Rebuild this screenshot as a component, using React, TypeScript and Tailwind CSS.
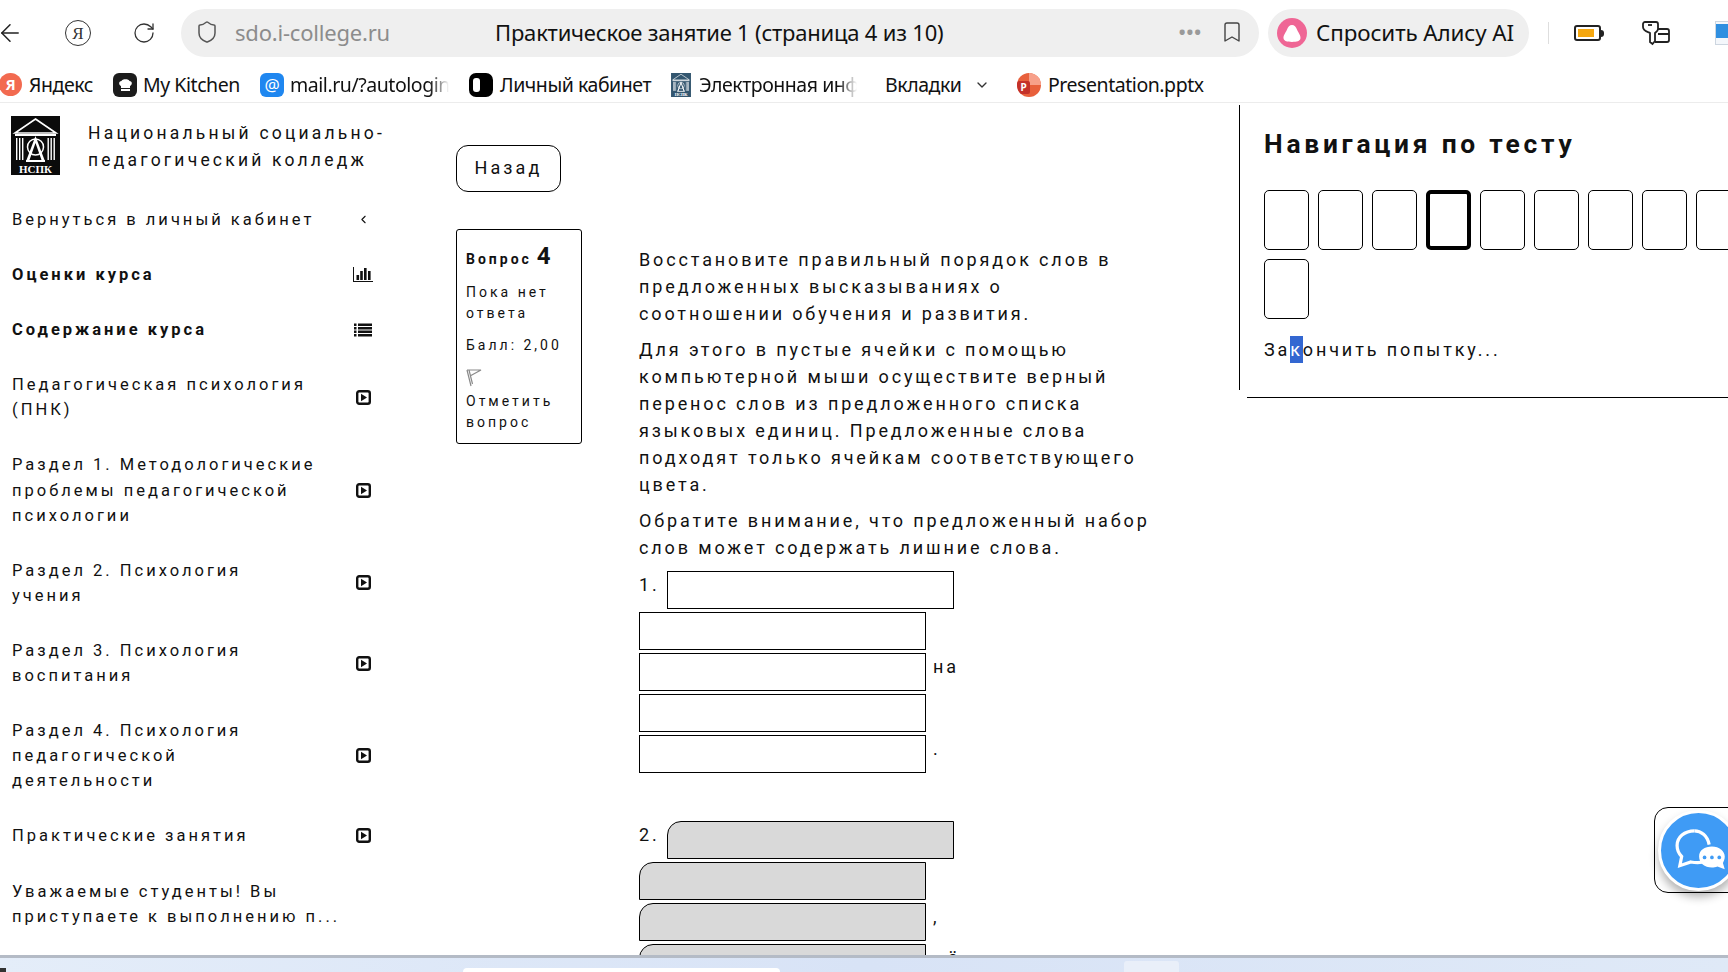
import { ArrowLeft, Bookmark, ChevronDown, ChevronLeft, RotateCw, Shield } from "lucide-react";

function PlayBox() {
  return (
    <svg width="15" height="15" viewBox="0 0 15 15" fill="none">
      <rect x="1.200" y="1.200" width="12.600" height="12.600" rx="2" stroke="#111" strokeWidth="2.400" />
      <path d="M5 3.800l6 3.700-6 3.700z" fill="#111" />
    </svg>
  );
}

function BarsIcon() {
  return (
    <svg width="20" height="15" viewBox="0 0 20 15" fill="#111">
      <path d="M0 0h1v14h19v1H0z" />
      <rect x="3.500" y="8" width="2.600" height="5" />
      <rect x="7.200" y="4" width="2.600" height="9" />
      <rect x="11" y="1" width="2.600" height="12" />
      <rect x="15" y="4" width="2.600" height="9" />
    </svg>
  );
}

function ListIcon() {
  return (
    <svg width="18" height="14" viewBox="0 0 18 14" fill="#111">
      <rect x="0" y="0.500" width="2.500" height="2.500" />
      <rect x="4" y="0.500" width="14" height="2.500" />
      <rect x="0" y="4" width="2.500" height="2.500" />
      <rect x="4" y="4" width="14" height="2.500" />
      <rect x="0" y="7.500" width="2.500" height="2.500" />
      <rect x="4" y="7.500" width="14" height="2.500" />
      <rect x="0" y="11" width="2.500" height="2.500" />
      <rect x="4" y="11" width="14" height="2.500" />
    </svg>
  );
}

function CollegeLogo({ small }: { small?: boolean }) {
  return (
    <svg width={small ? 24 : 49} height={small ? 24 : 59} viewBox="0 0 49 59" className="shrink-0">
      <rect width="49" height="59" fill={small ? "#33566f" : "#0b0b0b"} />
      <path d="M24.500 3L45 17H4z" fill="none" stroke="#fff" strokeWidth="1.600" />
      <rect x="4" y="18" width="41" height="2" fill="#fff" />
      <g fill="#fff">
        <rect x="5" y="22" width="1.400" height="22" />
        <rect x="8" y="22" width="1.400" height="22" />
        <rect x="11" y="22" width="1.400" height="22" />
        <rect x="36.500" y="22" width="1.400" height="22" />
        <rect x="39.500" y="22" width="1.400" height="22" />
        <rect x="42.500" y="22" width="1.400" height="22" />
      </g>
      <circle cx="24.500" cy="31" r="8" fill="none" stroke="#fff" strokeWidth="1.500" />
      <path d="M24.500 20l-9 24h3l6-17 6 17h3z" fill="#fff" />
      <path d="M15 44h19v2H15z" fill="#fff" />
      <text x="24.500" y="57" textAnchor="middle" fill="#fff" fontSize="11" fontWeight="700" fontFamily="'Liberation Serif', serif">НСПК</text>
    </svg>
  );
}

function Toolbar() {
  return (
    <div className="flex items-center h-[67px] pb-[1px] shrink-0 font-['Noto_Sans',sans-serif]">
      <ArrowLeft className="shrink-0 w-[28px] h-[28px] -ml-[4px] text-[#222]" strokeWidth={1.3} />
      <div className="shrink-0 ml-[41px] w-[26px] h-[26px] rounded-full border border-[#333] flex items-center justify-center text-[17px] leading-none text-[#333] font-['Liberation_Serif',serif]">Я</div>
      <RotateCw className="shrink-0 ml-[41px] w-[24px] h-[24px] text-[#333]" strokeWidth={1.3} />
      <div className="shrink-0 ml-[25px] w-[1078px] h-[48px] rounded-full bg-[#efefef] flex items-center pl-[14px] pr-[15px] pb-[2px]">
        <Shield className="shrink-0 w-[24px] h-[24px] text-[#555]" strokeWidth={1.5} />
        <span className="ml-[16px] w-[260px] text-[22px] tracking-[-0.2px] text-[#8c8c8c]">sdo.i-college.ru</span>
        <span className="text-[22px] tracking-[-0.2px] text-[#111]">Практическое занятие 1 (страница 4 из 10)</span>
        <span className="ml-auto text-[#9a9a9a] text-[18px] tracking-[1px] leading-none font-bold">•••</span>
        <Bookmark className="shrink-0 ml-[18px] w-[24px] h-[26px] text-[#444]" strokeWidth={1.4} />
      </div>
      <div className="shrink-0 ml-[9px] w-[261px] h-[48px] rounded-full bg-[#efefef] flex items-center pl-[9px]">
        <div className="w-[30px] h-[30px] rounded-full bg-[#ef6695] flex items-center justify-center">
          <svg width="18" height="17" viewBox="0 0 16 15" fill="#fff">
            <path d="M8 0c2.200 0 3.400 1.600 4.600 4.400C14 7.400 16 9.500 15.500 12c-.5 2.300-3 3-7.500 3S1 14.300.5 12C0 9.500 2 7.400 3.400 4.400 4.600 1.600 5.800 0 8 0z" />
          </svg>
        </div>
        <span className="ml-[9px] text-[22.4px] text-[#111] tracking-[-0.1px] whitespace-nowrap">Спросить Алису AI</span>
      </div>
      <div className="shrink-0 ml-[19px] w-px h-[22px] bg-[#dedede]" />
      <div className="shrink-0 ml-[25px] w-[27px] h-[16px] rounded-[3px] border-2 border-[#222] p-[2px] flex">
        <div className="w-[16px] bg-[#f5a70f]" />
      </div>
      <div className="shrink-0 w-[3px] h-[7px] bg-[#222] rounded-r-sm" />
      <svg className="shrink-0 ml-[38px]" width="28" height="28" viewBox="0 0 28 28" fill="none" stroke="#222" strokeWidth="1.800">
        <path d="M3 3h11a2 2 0 0 1 2 2v5c0 2-2 3-3 4v8l-2.500 3L8 23v-9C6 13 1 12 1 8V5a2 2 0 0 1 2-2z" />
        <path d="M6 6h4" />
        <path d="M16 10h9a2 2 0 0 1 2 2v9a2 2 0 0 1-2 2H13M16 15h11" />
      </svg>
      <div className="shrink-0 ml-[45px] relative w-[24px] h-[24px] border border-[#cdd6e0] bg-[#f4f7fb]">
        <div className="w-[14px] h-[14px] bg-[#2f8fe0] mt-[2px]" />
        <div className="absolute left-[12px] top-[14px] w-[14px] h-[14px] rounded-full bg-[#1673c8]" />
      </div>
    </div>
  );
}

function Bookmarks() {
  const fade = "[mask-image:linear-gradient(to_right,black_88%,transparent)]";
  return (
    <div className="flex items-center h-[36px] shrink-0 border-b border-[#ececec] text-[19.5px] tracking-[-0.45px] text-[#111] font-['Noto_Sans',sans-serif] whitespace-nowrap">
      <div className="-ml-[1px] w-[23px] h-[23px] rounded-full bg-[#f26a50] text-white text-[15px] font-bold flex items-center justify-center">Я</div>
      <span className="ml-[7px] w-[65px]">Яндекс</span>
      <div className="ml-[19px] w-[24px] h-[24px] rounded-[6px] bg-[#1c1c1c] flex items-center justify-center">
        <svg width="15" height="15" viewBox="0 0 15 15" fill="#fff">
          <path d="M3 9C.5 8 .5 4 3.500 4 4 1.500 11 1.500 11.500 4 14.500 4 14.500 8 12 9v2H3zM3 12h9v2H3z" />
        </svg>
      </div>
      <span className="ml-[6px] w-[97px]">My Kitchen</span>
      <div className="ml-[20px] w-[24px] h-[24px] rounded-[6px] bg-[#1f87f0] text-white text-[17px] leading-none flex items-center justify-center">@</div>
      <span className={`ml-[6px] w-[159px] overflow-hidden ${fade}`}>mail.ru/?autologin</span>
      <div className="ml-[20px] w-[24px] h-[24px] rounded-[7px] bg-black flex items-center pl-[4px]">
        <div className="w-[7px] h-[14px] rounded-[3px] bg-white" />
      </div>
      <span className="ml-[7px] w-[150px]">Личный кабинет</span>
      <div className="ml-[19px]"><CollegeLogo small /></div>
      <span className={`ml-[6px] w-[158px] overflow-hidden ${fade}`}>Электронная инф</span>
      <span className="ml-[28px] w-[77px]">Вкладки</span>
      <ChevronDown className="ml-[12px] w-[16px] h-[16px] text-[#333]" />
      <div className="ml-[27px] w-[24px] h-[24px] rounded-full bg-[#e8603c] relative overflow-hidden">
        <div className="absolute right-0 top-0 w-[12px] h-[12px] bg-[#f7a08a]" />
        <div className="absolute left-0 bottom-[3px] w-[13px] h-[13px] rounded-[2px] bg-[#c4312a] text-white text-[10px] leading-[13px] font-bold text-center">P</div>
      </div>
      <span className="ml-[7px]">Presentation.pptx</span>
    </div>
  );
}

const navItems = [
  "Педагогическая психология (ПНК)",
  "Раздел 1. Методологические проблемы педагогической психологии",
  "Раздел 2. Психология учения",
  "Раздел 3. Психология воспитания",
  "Раздел 4. Психология педагогической деятельности",
  "Практические занятия",
];

function NavRow({ text, bold, icon }: { text: string; bold?: boolean; icon?: React.ReactNode }) {
  return (
    <div className="flex items-center py-[15px] pl-[12px] w-[400px]">
      <div className={`${icon ? "w-[304px]" : "w-[340px]"} text-[16.5px] leading-[25.1px] tracking-[3px] text-[#111] ${bold ? "font-bold" : ""}`}>{text}</div>
      {icon && <div className="ml-[34px] w-[26px] flex justify-center">{icon}</div>}
    </div>
  );
}

function Sidebar() {
  return (
    <aside className="w-[456px] shrink-0 overflow-hidden">
      <div className="flex items-start pt-[13px] pl-[11px]">
        <CollegeLogo />
        <div className="ml-[28px] mt-[4px] text-[17.5px] leading-[27px] tracking-[3.2px] text-[#111]">
          Национальный социально-<br />педагогический колледж
        </div>
      </div>
      <div className="mt-[17px]">
        <NavRow text="Вернуться в личный кабинет" icon={<ChevronLeft className="w-[13px] h-[13px] text-[#111]" />} />
        <NavRow text="Оценки курса" bold icon={<BarsIcon />} />
        <NavRow text="Содержание курса" bold icon={<ListIcon />} />
        {navItems.map((item) => (
          <NavRow key={item} text={item} icon={<PlayBox />} />
        ))}
        <NavRow text="Уважаемые студенты! Вы приступаете к выполнению п..." />
      </div>
    </aside>
  );
}

function QuestionInfo() {
  return (
    <div className="w-[126px] h-[215px] shrink-0 rounded-[3px] border border-black pl-[9px] pt-[10px] text-[14px] leading-[21px] tracking-[3px] text-[#111]">
      <div className="flex items-baseline h-[32px] font-bold">
        <span>Вопрос</span>
        <span className="ml-[5px] text-[24px] leading-[32px] tracking-normal">4</span>
      </div>
      <div className="mt-[10px]">Пока нет ответа</div>
      <div className="mt-[11px]">Балл: 2,00</div>
      <svg className="mt-[13px] mb-[4px]" width="16" height="18" viewBox="0 0 16 18" fill="none" stroke="#8a8a8a" strokeWidth="1.200">
        <path d="M1 1l4 16M3 1l3.500 14M1 1h14L4 7" />
      </svg>
      <div>Отметить вопрос</div>
    </div>
  );
}

function DropBox({ gray }: { gray?: boolean }) {
  return (
    <div className={`w-[287px] h-[38px] shrink-0 border-[1.5px] border-black ${gray ? "bg-[#d9d9d9] rounded-tl-[14px]" : "bg-white"}`} />
  );
}

function DropRow({ label, after, gray }: { label?: string; after?: string; gray?: boolean }) {
  return (
    <div className="flex items-start mt-[3px] leading-[27px]">
      {label && <span className="w-[28px] shrink-0">{label}</span>}
      <DropBox gray={gray} />
      {after && <span className="ml-[7px] whitespace-pre">{after}</span>}
    </div>
  );
}

function Question() {
  return (
    <div className="mt-[17px] w-[515px] text-[18px] leading-[27px] tracking-[2.87px] text-[#111]">
      <p>Восстановите правильный порядок слов в предложенных высказываниях о соотношении обучения и развития.</p>
      <p className="mt-[9px]">Для этого в пустые ячейки с помощью компьютерной мыши осуществите верный перенос слов из предложенного списка языковых единиц. Предложенные слова подходят только ячейкам соответствующего цвета.</p>
      <p className="mt-[9px]">Обратите внимание, что предложенный набор слов может содержать лишние слова.</p>
      <div className="mt-[10px]">
        <DropRow label="1." />
        <DropRow />
        <DropRow after="на" />
        <DropRow />
        <DropRow after="." />
      </div>
      <div className="mt-[48px]">
        <DropRow label="2." gray />
        <DropRow gray />
        <DropRow gray after="," />
        <DropRow gray after={"\u00a0\u00a0ё"} />
      </div>
    </div>
  );
}

function TestNav() {
  const pages = [1, 2, 3, 4, 5, 6, 7, 8, 9, 10];
  return (
    <aside className="flex-1 min-w-0 overflow-hidden pt-[2px]">
      <div className="h-[285px] border-l border-black pl-[24px] pt-[23px]">
        <h2 className="text-[26.4px] leading-[32px] font-bold tracking-[3.75px] text-[#111] whitespace-nowrap">Навигация по тесту</h2>
        <div className="mt-[30px] w-[486px] flex flex-wrap gap-[9px]">
          {pages.map((p) => (
            <div key={p} className={`w-[45px] h-[60px] rounded-[5px] border-black ${p === 4 ? "border-4" : "border"}`} />
          ))}
        </div>
        <div className="mt-[17px] text-[18px] leading-[27px] tracking-[2.87px] text-[#111]">
          За<span className="inline-block bg-[#3367d1] text-white">к</span>ончить попытку...
        </div>
      </div>
      <div className="ml-[8px] mt-[7px] border-t border-black" />
    </aside>
  );
}

function ChatWidget() {
  return (
    <div className="absolute left-[1654px] top-[704px] w-[100px] h-[86px] rounded-[14px] border border-black">
      <div className="ml-[3px] mt-[2px] w-[81px] h-[81px] rounded-full bg-[#3f9bf5] border-[3px] border-white shadow-[0_6px_10px_rgba(0,0,0,0.3)] flex items-center justify-center">
        <svg width="52" height="44" viewBox="0 0 56 48" className="ml-[2px]">
          <path d="M22 2C11 2 3 9 3 18c0 5 2 9 5 12l-2 10 12-4c5 1 12 1 17-1" fill="none" stroke="#fff" strokeWidth="3.500" />
          <path d="M38 17C36 7 29 2 22 2" fill="none" stroke="#fff" strokeWidth="3.500" />
          <path d="M41 19c8 0 14 5 14 11 0 3-1 5-2 7l2 7-8-3c-2 1-4 1-6 1-8 0-14-5-14-12s6-11 14-11z" fill="#fff" />
          <circle cx="33" cy="31" r="2" fill="#3f9bf5" />
          <circle cx="41" cy="31" r="2" fill="#3f9bf5" />
          <circle cx="49" cy="31" r="2" fill="#3f9bf5" />
        </svg>
      </div>
    </div>
  );
}

function Taskbar() {
  return (
    <div className="h-[17px] shrink-0 border-t-[3px] border-[#b4bbc6] bg-gradient-to-r from-[#e4edf9] via-[#d8e3f6] to-[#dfe9f7] flex items-end">
      <div className="w-[6px] h-[4px] bg-[#333]" />
      <div className="ml-[457px] w-[317px] h-[4px] rounded-t-[8px] bg-white" />
      <div className="ml-[344px] w-[55px] h-[11px] rounded-t-[3px] bg-[#e9eff9]" />
    </div>
  );
}

export default function App() {
  return (
    <div className="h-screen w-full overflow-hidden flex flex-col bg-white font-['Roboto',sans-serif]">
      <Toolbar />
      <Bookmarks />
      <div className="relative flex flex-1 min-h-0 overflow-hidden">
        <Sidebar />
        <main className="w-[783px] shrink-0 overflow-hidden pt-[42px]">
          <button className="block w-[105px] h-[47px] pb-[2px] rounded-[12px] border border-black text-[18px] tracking-[3.1px] text-[#111]">Назад</button>
          <div className="mt-[37px] flex gap-[57px]">
            <QuestionInfo />
            <Question />
          </div>
        </main>
        <TestNav />
        <ChatWidget />
      </div>
      <Taskbar />
    </div>
  );
}
